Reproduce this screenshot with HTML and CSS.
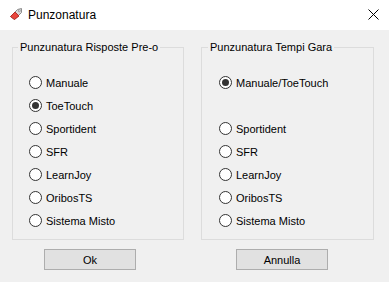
FILE: index.html
```html
<!DOCTYPE html>
<html lang="it">
<head>
    <meta charset="UTF-8">
    <title>Punzonatura</title>
    <link rel="stylesheet" href="styles.css">
</head>
<body>
    <div id="window">
        <div class="titlebar">
            <svg class="app-icon" width="16" height="16" viewBox="0 0 16 16">
                <path d="M2.5 10.5 L9.5 3.5 L13.5 2.5 L13.5 6.5 L6.5 13.5 Z" fill="#d9d9d9" stroke="#8c8c8c" stroke-width="1"/>
                <path d="M2.5 10.5 L7 6 L11 10 L6.5 13.5 Z" fill="#e8463c" stroke="#b3302a" stroke-width="1"/>
                <circle cx="11.3" cy="4.8" r="1" fill="#fff" stroke="#8c8c8c" stroke-width="0.8"/>
            </svg>
            <span class="title">Punzonatura</span>
            <svg class="close" width="11" height="11" viewBox="0 0 11 11">
                <path d="M0.5 0.5 L10.5 10.5 M10.5 0.5 L0.5 10.5" stroke="#000" stroke-width="1"/>
            </svg>
        </div>

        <div class="content">
            <div class="groups">
                <fieldset class="group group-left">
                    <legend>Punzunatura Risposte Pre-o</legend>
                    <label class="opt"><span class="radio"></span>Manuale</label>
                    <label class="opt"><span class="radio checked"></span>ToeTouch</label>
                    <label class="opt"><span class="radio"></span>Sportident</label>
                    <label class="opt"><span class="radio"></span>SFR</label>
                    <label class="opt"><span class="radio"></span>LearnJoy</label>
                    <label class="opt"><span class="radio"></span>OribosTS</label>
                    <label class="opt"><span class="radio"></span>Sistema Misto</label>
                </fieldset>
                <fieldset class="group group-right">
                    <legend>Punzunatura Tempi Gara</legend>
                    <label class="opt"><span class="radio checked"></span>Manuale/ToeTouch</label>
                    <div class="opt"></div>
                    <label class="opt"><span class="radio"></span>Sportident</label>
                    <label class="opt"><span class="radio"></span>SFR</label>
                    <label class="opt"><span class="radio"></span>LearnJoy</label>
                    <label class="opt"><span class="radio"></span>OribosTS</label>
                    <label class="opt"><span class="radio"></span>Sistema Misto</label>
                </fieldset>
            </div>
            <div class="buttons">
                <button class="btn">Ok</button>
                <button class="btn">Annulla</button>
            </div>
        </div>
    </div>
</body>
</html>
```

FILE: styles.css
```css
* {
    margin: 0;
    padding: 0;
    box-sizing: border-box;
}

body {
    width: 389px;
    height: 282px;
    background: #f0f0f0;
    font-family: "Liberation Sans", Arial, sans-serif;
    font-size: 11px;
    color: #000;
    overflow: hidden;
}

.titlebar {
    height: 30px;
    background: #fff;
    display: flex;
    align-items: center;
    padding-left: 8px;
}

.app-icon {
    margin-right: 4px;
    margin-top: -3px;
}

.title {
    font-size: 12px;
    flex: 1;
}

.close {
    margin-right: 10px;
    margin-top: -1px;
}

.content {
    padding-top: 11px;
}

.groups {
    display: flex;
    gap: 17px;
    padding-left: 12px;
}

.group {
    border: 1px solid #dcdcdc;
    height: 199px;
    padding: 17px 0 0 16px;
}

.group-left {
    width: 172px;
}

.group-right {
    width: 173px;
    padding-left: 17px;
}

.group legend {
    padding: 0 2px;
    margin-left: -11px;
    line-height: 13px;
}

.opt {
    display: flex;
    align-items: center;
    height: 23px;
}

.radio {
    width: 13px;
    height: 13px;
    border: 1px solid #333;
    border-radius: 50%;
    background: #fff;
    margin-right: 4px;
    display: flex;
    align-items: center;
    justify-content: center;
}

.radio.checked::after {
    content: "";
    width: 7px;
    height: 7px;
    border-radius: 50%;
    background: #333;
}

.buttons {
    display: flex;
    gap: 100px;
    padding-left: 44px;
    margin-top: 9px;
}

.btn {
    width: 92px;
    height: 21px;
    background: #e1e1e1;
    border: 1px solid #adadad;
    font-family: "Liberation Sans", Arial, sans-serif;
    font-size: 11px;
    color: #000;
}
```
